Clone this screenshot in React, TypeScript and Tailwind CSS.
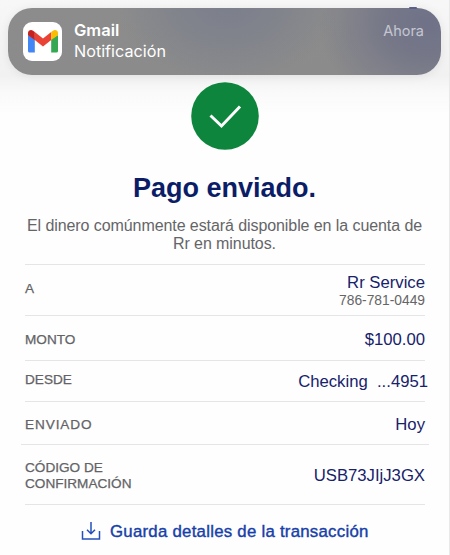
import type { ReactNode } from "react";

const labelClass = "text-[13.6px] leading-4 text-[#636366] [-webkit-text-stroke:0.25px_#636366]";
const valueClass = "text-[16.7px] leading-5 text-[#17226b] whitespace-pre";

function Row({ className, children }: { className: string; children: ReactNode }) {
  return <div className={`flex items-start justify-between ${className}`}>{children}</div>;
}

function GmailIcon() {
  return (
    <div className="flex size-[39px] shrink-0 items-center justify-center rounded-[9px] bg-white">
      <svg viewBox="0 0 30 22.5" className="h-[22.5px] w-[30px]">
        <path d="M0 5v16a1.5 1.5 0 0 0 1.5 1.5h5.3V9Z" fill="#4285f4" />
        <path d="M30 5v16a1.5 1.5 0 0 1-1.5 1.5h-5.3V9Z" fill="#34a853" />
        <path d="M6.8 2 15 8.4 23.2 2v8L15 16.4 6.8 10Z" fill="#ea4335" />
        <path d="M0 5.2V3C0 .6 2.9-.8 5 .7L6.8 2v8L0 5.2Z" fill="#c5221f" />
        <path d="M30 5.2V3c0-2.4-2.9-3.8-5-2.3L23.2 2v8L30 5.2Z" fill="#fbbc04" />
      </svg>
    </div>
  );
}

export default function App() {
  return (
    <div className="h-[555px] w-[450px] overflow-hidden border-r border-[#e9e9e9] bg-[linear-gradient(to_bottom,#f7f7f7_0px,#f1f1f1_76px,#fafafa_94px,#fefefe_115px)] font-['Liberation_Sans',Arial,sans-serif]">
      <div className="pt-2">
        <div className="relative ml-2 flex h-[67px] w-[433px] items-start rounded-[24px] bg-[radial-gradient(ellipse_110px_90px_at_420px_15px,#6f7288_0%,#767888_40%,transparent_100%),radial-gradient(ellipse_110px_80px_at_220px_-5px,#7b7f8c_0%,#82848c_50%,transparent_100%),linear-gradient(#8c8c8c,#8b8b8b)] pt-[14px] pl-[15px] shadow-[0_1px_10px_rgba(0,0,0,0.08)]">
          <span className="absolute -top-px left-[401px] h-[2px] w-[8px] rounded-full bg-[#5a608a]" />
          <GmailIcon />
          <div className="-mt-[2px] ml-[12px] text-white">
            <div className="font-['Inter','Liberation_Sans',sans-serif] text-[16.5px] leading-[21px] font-semibold">Gmail</div>
            <div className="font-['Inter','Liberation_Sans',sans-serif] text-[16.2px] leading-[21px]">Notificación</div>
          </div>
          <div className="-mt-px mr-[17px] ml-auto font-['Inter','Liberation_Sans',sans-serif] text-[14.5px] leading-[20px] text-[#c5c6d2]">Ahora</div>
        </div>
      </div>

      <svg viewBox="0 0 68 68" className="mt-[7px] ml-[191px] size-[68px]">
        <circle cx="34" cy="34" r="33.8" fill="#0d853c" />
        <path d="m19.5 33.5 11 10.5L49 24.5" fill="none" stroke="#fff" strokeWidth="3" />
      </svg>

      <h1 className="mt-[21px] text-center text-[27px] leading-[34px] font-bold text-[#0b1d67]">Pago enviado.</h1>
      <p className="mt-[12px] text-center text-[16px] leading-[18px] tracking-[-0.08px] text-[#656568]">
        El dinero comúnmente estará disponible en la cuenta de<br />Rr en minutos.
      </p>

      <div className="mt-[11px] mr-[24px] ml-[25px]">
        <Row className="h-[51px] border-t border-[#e5e5e7]">
          <span className={`mt-[16px] ${labelClass}`}>A</span>
          <div className="mt-[8px] text-right">
            <div className={valueClass}>Rr Service</div>
            <div className="text-[13.8px] leading-4 text-[#656568]">786-781-0449</div>
          </div>
        </Row>
        <Row className="h-[45px] border-t border-[#e5e5e7]">
          <span className={`mt-[16px] ${labelClass}`}>MONTO</span>
          <span className={`mt-[14px] ${valueClass}`}>$100.00</span>
        </Row>
        <Row className="h-[41px] border-t border-[#e5e5e7]">
          <span className={`mt-[11px] ${labelClass}`}>DESDE</span>
          <span className={`mt-[11px] -mr-[3px] ${valueClass}`}>Checking  ...4951</span>
        </Row>
        <Row className="h-[43px] border-t border-[#e5e5e7]">
          <span className={`mt-[15px] tracking-[0.9px] ${labelClass}`}>ENVIADO</span>
          <span className={`mt-[13px] ${valueClass}`}>Hoy</span>
        </Row>
        <Row className="-mx-1 h-[60px] border-t border-[#e5e5e7] px-1">
          <span className={`mt-[15px] ${labelClass}`}>CÓDIGO DE<br />CONFIRMACIÓN</span>
          <span className={`mt-[21px] ${valueClass}`}>USB73JIjJ3GX</span>
        </Row>
        <div className="flex border-t border-[#e5e5e7] pt-[16px]">
          <svg viewBox="0 0 20 20" className="ml-[56px] size-[20px]" fill="none" stroke="#2450ba" strokeWidth="1.5">
            <path d="M1.5 10v8h17v-8M10 1v11.5M6 8.8l4 4 4-4" />
          </svg>
          <span className="ml-[9px] text-[16.8px] leading-[22px] tracking-[0.26px] whitespace-nowrap text-[#173fa9] [-webkit-text-stroke:0.4px_#173fa9]">Guarda detalles de la transacción</span>
        </div>
      </div>
    </div>
  );
}
